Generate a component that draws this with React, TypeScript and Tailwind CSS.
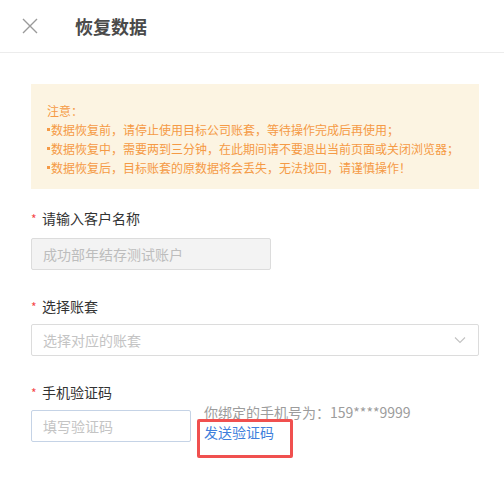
import React from 'react'

const notes = [
    '数据恢复前，请停止使用目标公司账套，等待操作完成后再使用；',
    '数据恢复中，需要两到三分钟，在此期间请不要退出当前页面或关闭浏览器；',
    '数据恢复后，目标账套的原数据将会丢失，无法找回，请谨慎操作！',
]

function Label({ text }: { text: string }) {
    return (
        <div className="flex items-center h-5 text-[14px] text-[#333]">
            <span className="text-[#f5484a] text-[12px] w-[11px] mt-[2px]">*</span>
            <span>{text}</span>
        </div>
    )
}

export default function App() {
    return (
        <div className="w-[504px] h-[500px] bg-white" style={{ fontFamily: '"Noto Sans CJK SC", "Liberation Sans", sans-serif' }}>
            <div className="flex items-center h-[53px] border-b border-[#ececec] px-[22px]">
                <svg width="16" height="16" viewBox="0 0 16 16" className="shrink-0">
                    <path d="M1 1L15 15M15 1L1 15" stroke="#9a9a9a" strokeWidth="1.4" fill="none" />
                </svg>
                <h1 className="ml-[37px] text-[18px] font-bold text-[#4a4a4a] leading-none">恢复数据</h1>
            </div>

            <div className="px-[31px] pr-[25px]">
                <div className="mt-[31px] h-[105px] bg-[#fcf4e2] px-4 pt-[17px] text-[12px] leading-[19px] text-[#f59a45] whitespace-nowrap">
                    <p>注意：</p>
                    {notes.map((n, i) => (
                        <p key={i} className="flex items-center">
                            <span className="inline-block w-[3px] h-[3px] bg-[#f59a45] mr-[1px]" />
                            <span>{n}</span>
                        </p>
                    ))}
                </div>

                <div className="mt-[19px]">
                    <Label text="请输入客户名称" />
                    <div className="mt-[10px] w-[240px] h-[32px] border border-[#dcdcdc] rounded-[2px] bg-[#f3f3f3] flex items-center px-[11px] text-[14px] text-[#bdbdbd]">
                        成功部年结存测试账户
                    </div>
                </div>

                <div className="mt-[26px]">
                    <Label text="选择账套" />
                    <div className="mt-[8px] h-[32px] border border-[#dcdcdc] rounded-[2px] bg-white flex items-center justify-between px-[11px] text-[14px] text-[#c4c4c4]">
                        <span>选择对应的账套</span>
                        <svg width="12" height="8" viewBox="0 0 12 8" className="mr-[1px]">
                            <path d="M1 1.5L6 6.5L11 1.5" stroke="#c2c2c2" strokeWidth="1.1" fill="none" />
                        </svg>
                    </div>
                </div>

                <div className="mt-[26px]">
                    <Label text="手机验证码" />
                    <div className="mt-[8px] flex items-start">
                        <div className="w-[160px] h-[32px] border border-[#c5d3e6] rounded-[2px] bg-white flex items-center px-[11px] text-[14px] text-[#c4c4c4]">
                            填写验证码
                        </div>
                        <div className="ml-[13px] -mt-[8px] text-[14px] leading-[20px]">
                            <div className="text-[#9c9c9c]">你绑定的手机号为：159****9999</div>
                            <div className="relative text-[#3f7fdc]">
                                发送验证码
                                <div className="absolute left-[-7px] top-[-3px] w-[96px] h-[39px] border-[3px] border-[#f0504f] rounded-[2px]" />
                            </div>
                        </div>
                    </div>
                </div>
            </div>
        </div>
    )
}
